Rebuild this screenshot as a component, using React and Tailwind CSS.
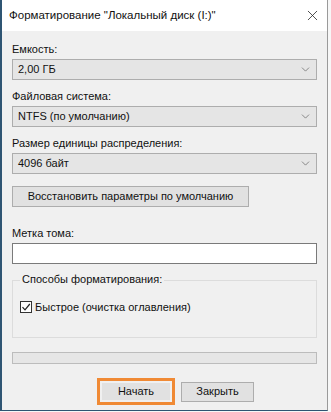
import { ChevronDown, X } from "lucide-react";

function Select({ value }) {
  return (
    <div className="flex h-[21px] items-center justify-between border border-[#adadad] bg-[#e5e5e5] pl-[5px] pr-[4px]">
      <span>{value}</span>
      <ChevronDown size={13} strokeWidth={1.2} className="text-[#555]" />
    </div>
  );
}

export default function App() {
  return (
    <div className="flex h-[412px] w-[331px] bg-[#f7f7f7] text-[11px] text-[#111]" style={{ fontFamily: '"Liberation Sans", Arial, sans-serif' }}>
      <div className="flex h-[411px] w-[328px] flex-col border-b border-l-2 border-r border-b-[#2f5573] border-l-[#2f5573] border-r-[#9a9a9a] bg-[#f0f0f0]">
        {/* title */}
        <div className="flex h-[31px] items-center justify-between bg-white pl-[7px] pr-[6px]">
          <span className="text-[11.5px]">Форматирование "Локальный диск (I:)"</span>
          <X size={17} strokeWidth={1.1} className="text-[#222]" />
        </div>

        <div className="flex flex-col px-[10px] pt-[9px]">
          <div className="h-[19px] leading-[19px]">Емкость:</div>
          <Select value="2,00 ГБ" />
          <div className="mt-[7px] h-[19px] leading-[19px]">Файловая система:</div>
          <Select value="NTFS (по умолчанию)" />
          <div className="mt-[7px] h-[19px] leading-[19px]">Размер единицы распределения:</div>
          <Select value="4096 байт" />

          <div className="mt-[12px] flex h-[21px] w-[237px] items-center justify-center whitespace-nowrap border border-[#adadad] bg-[#e1e1e1]">
            Восстановить параметры по умолчанию
          </div>

          <div className="mt-[17px] h-[19px] leading-[19px]">Метка тома:</div>
          <div className="h-[21px] border border-[#7a7a7a] bg-white" />

          <div className="relative mt-[16px] h-[58px] border border-[#dcdcdc]">
            <span className="absolute left-[7px] top-[-10px] bg-[#f0f0f0] px-[2px]">Способы форматирования:</span>
            <div className="ml-[7px] mt-[18px] flex items-center gap-[3px]">
              <div className="flex h-[12px] w-[12px] items-center justify-center border border-[#333] bg-white">
                <svg width="10" height="10" viewBox="0 0 10 10">
                  <path d="M1.5 5.2 L4 7.8 L8.8 2" fill="none" stroke="#222" strokeWidth="1.2" />
                </svg>
              </div>
              <span>Быстрое (очистка оглавления)</span>
            </div>
          </div>

          <div className="mt-[14px] h-[12px] border border-[#bcbcbc] bg-[#e6e6e6]" />

          <div className="mt-[14px] flex items-center gap-[6px] pl-[85px]">
            <div className="border-[3px] border-[#f08a35] p-[2px]">
              <div className="flex h-[17px] w-[68px] items-center justify-center bg-[#e1e1e1]">Начать</div>
            </div>
            <div className="flex h-[20px] w-[73px] items-center justify-center border border-[#adadad] bg-[#e1e1e1]">Закрыть</div>
          </div>
        </div>
      </div>
    </div>
  );
}
